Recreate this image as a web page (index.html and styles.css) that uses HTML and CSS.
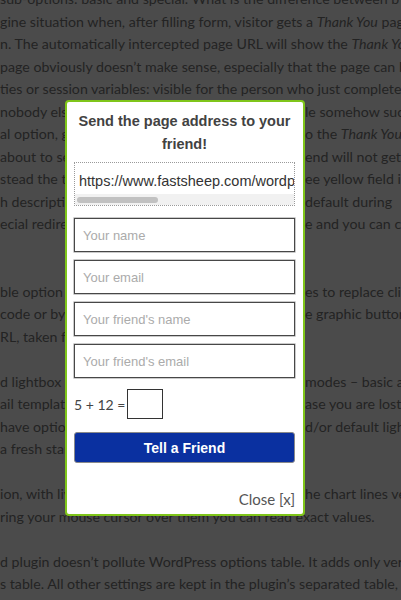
FILE: index.html
```html
<!DOCTYPE html>
<html lang="en">
<head>
<meta charset="utf-8">
<title>Tell a Friend</title>
<link rel="stylesheet" href="styles.css">
</head>
<body>
<div class="page">
  <div class="line">sub-options: basic and special. What is the difference between b</div>
  <div class="line">gine situation when, after filling form, visitor gets a <em>Thank You</em> page</div>
  <div class="line">n. The automatically intercepted page URL will show the <em>Thank You</em></div>
  <div class="line">page obviously doesn’t make sense, especially that the page can be</div>
  <div class="line">ties or session variables: visible for the person who just completed</div>
  <div class="line split"><span class="l">nobody else. And if somebody else would be ab</span><span class="r">le somehow such</span></div>
  <div class="line split"><span class="l">al option, giving you possibility to redirect t</span><span class="r">o the <em>Thank You</em></span></div>
  <div class="line split"><span class="l">about to send the page address, your fri</span><span class="r">end will not get</span></div>
  <div class="line split"><span class="l">stead the typed URL address (s</span><span class="r">ee yellow field in</span></div>
  <div class="line split"><span class="l">h description is filled in by</span><span class="r">default during</span></div>
  <div class="line split"><span class="l">ecial redirection is switched off her</span><span class="r">e and you can ch</span></div>
  <div class="line">&nbsp;</div>
  <div class="line">&nbsp;</div>
  <div class="line split"><span class="l">ble option is available for those who lik</span><span class="r">es to replace click</span></div>
  <div class="line split"><span class="l">code or by some custom icon, or with th</span><span class="r">e graphic button</span></div>
  <div class="line">RL, taken from the page.</div>
  <div class="line">&nbsp;</div>
  <div class="line split"><span class="l">d lightbox CSS styles have two different </span><span class="r">modes – basic and</span></div>
  <div class="line split"><span class="l">ail templates – in edit mode. In c</span><span class="r">ase you are lost</span></div>
  <div class="line split"><span class="l">have option to restore original an</span><span class="r">d/or default light</span></div>
  <div class="line">a fresh start.</div>
  <div class="line">&nbsp;</div>
  <div class="line split"><span class="l">ion, with live charts of usage. T</span><span class="r">he chart lines ver</span></div>
  <div class="line">ring your mouse cursor over them you can read exact values.</div>
  <div class="line">&nbsp;</div>
  <div class="line">d plugin doesn’t pollute WordPress options table. It adds only very</div>
  <div class="line">s table. All other settings are kept in the plugin’s separated table,</div>
</div>

<div class="modal">
  <h2 class="modal-title">Send the page address to your friend!</h2>
  <div class="url-box">
    <div class="url-text">https://www.fastsheep.com/wordpress-plugins/tell-a-friend/</div>
    <div class="url-scroll"><span class="url-thumb"></span></div>
  </div>
  <div class="field">Your name</div>
  <div class="field">Your email</div>
  <div class="field">Your friend's name</div>
  <div class="field">Your friend's email</div>
  <div class="captcha">
    <span class="captcha-label">5 + 12 =</span>
    <span class="captcha-box"></span>
  </div>
  <div class="send-btn">Tell a Friend</div>
  <div class="close">Close [x]</div>
</div>
</body>
</html>
```

FILE: styles.css
```css
html, body {
  margin: 0;
  padding: 0;
}
body {
  width: 401px;
  height: 600px;
  overflow: hidden;
  background: #4b4b4b;
  position: relative;
}
.page {
  font-family: Lato, "Liberation Sans", sans-serif;
  font-size: 14.2px;
  line-height: 22.5px;
  color: #232323;
  margin-top: -12px;
}
.line {
  white-space: nowrap;
  overflow: hidden;
}
.split {
  display: flex;
}
.split .l {
  flex: 0 0 305px;
  overflow: hidden;
}
.split .r {
  flex: 0 0 auto;
}
.line em {
  font-style: italic;
}
.modal {
  position: absolute;
  left: 65px;
  top: 100px;
  width: 240px;
  height: 416px;
  box-sizing: border-box;
  border: 2px solid #7fc51a;
  border-radius: 4px;
  background: #ffffff;
  padding: 8px 8px 0 7px;
  display: flex;
  flex-direction: column;
}
.modal-title {
  margin: 0;
  font-family: "Liberation Sans", Arial, sans-serif;
  font-weight: 700;
  font-size: 14.5px;
  line-height: 23px;
  color: #424242;
  text-align: center;
}
.url-box {
  margin-top: 6px;
  height: 44px;
  box-sizing: border-box;
  border: 1px dotted #9a9a9a;
  display: flex;
  flex-direction: column;
  overflow: hidden;
}
.url-text {
  font-family: "Liberation Sans", Arial, sans-serif;
  font-size: 14.5px;
  line-height: 20px;
  color: #333333;
  white-space: nowrap;
  overflow: hidden;
  padding: 8px 0 0 4px;
}
.url-scroll {
  margin-top: 3px;
  height: 11px;
  background: #f1f1f1;
  display: flex;
  align-items: center;
  padding-left: 2px;
}
.url-thumb {
  display: block;
  width: 81px;
  height: 6px;
  border-radius: 3px;
  background: #c1c1c1;
}
.field {
  margin-top: 8px;
  height: 34px;
  box-sizing: border-box;
  border: 1px solid #474747;
  box-shadow: 0 0 0 0.6px rgba(0, 0, 0, 0.35);
  padding-left: 8px;
  display: flex;
  align-items: center;
  font-family: "Liberation Sans", Arial, sans-serif;
  font-size: 13px;
  color: #ababab;
}
.url-box + .field {
  margin-top: 12px;
}
.captcha {
  margin-top: 11px;
  display: flex;
  align-items: center;
  gap: 2px;
}
.captcha-label {
  font-family: Lato, "Liberation Sans", sans-serif;
  font-size: 14px;
  color: #444444;
}
.captcha-box {
  display: block;
  width: 36px;
  height: 30px;
  box-sizing: border-box;
  border: 1px solid #333333;
}
.send-btn {
  margin-top: 13px;
  height: 31px;
  box-sizing: border-box;
  border: 1px solid #8a8a8a;
  border-radius: 3px;
  background: #0a30a0;
  color: #ffffff;
  font-family: "Liberation Sans", Arial, sans-serif;
  font-weight: 700;
  font-size: 14px;
  display: flex;
  align-items: center;
  justify-content: center;
}
.close {
  margin-top: 26px;
  text-align: right;
  font-family: Lato, "Liberation Sans", sans-serif;
  font-size: 15px;
  line-height: 20px;
  color: #555555;
}
```
